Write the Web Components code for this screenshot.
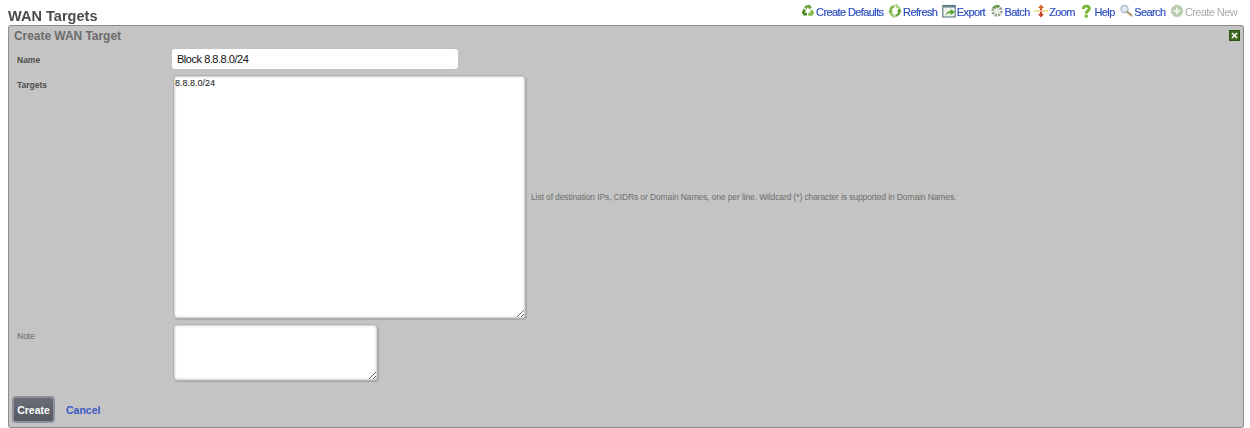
<!DOCTYPE html>
<html>
<head>
<meta charset="utf-8">
<title>WAN Targets</title>
<style>
  html, body { margin: 0; padding: 0; background: #fff; }
  body { font-family: "Liberation Sans", Arial, sans-serif; }
</style>
</head>
<body>
<wan-page>
  <tool-link slot="tools" icon="recycle">Create Defaults</tool-link>
  <tool-link slot="tools" icon="refresh">Refresh</tool-link>
  <tool-link slot="tools" icon="export">Export</tool-link>
  <tool-link slot="tools" icon="batch">Batch</tool-link>
  <tool-link slot="tools" icon="zoom">Zoom</tool-link>
  <tool-link slot="tools" icon="help">Help</tool-link>
  <tool-link slot="tools" icon="search">Search</tool-link>
  <tool-link slot="tools" icon="create" disabled>Create New</tool-link>
  <wan-form slot="content"></wan-form>
</wan-page>

<script>
const ICONS = {
  recycle: `<path d="M4.500 1.500 9 .8l1.800 3-2.400 1.400L7 3 5.600 5.200 3.200 3.800z" fill="#6aa338"/><path d="M2.600 4.800 5 6.200 3.600 8.800H6v2.800H2.600L.8 8.400z" fill="#4f8a26"/><path d="M7.200 8.800h2.600L8.800 7l2.400-1.400 2 3.200-2 3H7.200z" fill="#86bb50"/>`,
  refresh: `<path d="M6.400 1C3 1.400 1.200 3.800 1.400 7H.2l2.600 3.400L5.200 7H3.900C3.800 5.200 4.800 3.900 6.400 3.500z" fill="#7fb64c"/><path d="M7 .8 9.600 0v1.400c2.400.9 3.600 3 3.400 5.400h-2.300c.1-1.600-.6-2.800-2-3.300V5z" fill="#a8d27e"/><path d="M7.400 13c3.400-.4 5.200-2.700 5.200-5.400h1.200L11 4.400 8.800 7.600h1.300c0 1.700-1 2.800-2.700 3z" fill="#66a236"/><path d="M7 13.400 4.600 14v-1.500C2.600 11.700 1.500 10.400 1.200 9l2.200-.4c.3 1 .9 1.500 1.800 1.800V8.800z" fill="#95c76a"/>`,
  export: `<rect x=".8" y="1.500" width="12.400" height="11.500" fill="#eef3ee" stroke="#5a7380" stroke-width="1.100"/><rect x="1" y="2" width="12" height="1.600" fill="#6b8897"/><path d="M3.500 11.500C4.200 8.300 6.400 7 8.500 7V5L13 8 8.500 11.200V9C6.800 9 5 9.800 3.500 11.500z" fill="#5aa632"/>`,
  batch: `<circle cx="7" cy="7" r="4.200" fill="none" stroke="#9aa392" stroke-width="3" stroke-dasharray="2.200 1"/><path d="M3 4.500A5 5 0 0 1 9.500 2.600" fill="none" stroke="#6f9c4a" stroke-width="2.400"/><circle cx="7" cy="7" r="2" fill="#ecece6"/>`,
  zoom: `<path d="M7 .5 10 4H8.100V6.500H5.900V4H4z" fill="#d9612a"/><path d="M7 13.500 10 10H8.100V7.500H5.900V10H4z" fill="#c7402a"/><path d="M.5 6.300h2v1.400h-2zM3.300 6.300h2v1.400h-2zM8.700 6.300h2v1.400h-2zM11.500 6.300h2v1.400h-2z" fill="#e3cf3a"/>`,
  help: `<path d="M4.200 5C4.200 3 5.500 2.100 7.300 2.100c1.800 0 3 1 3 2.400 0 2.400-3 2.400-3 5" fill="none" stroke="#76b332" stroke-width="2.900"/><rect x="5.700" y="10.600" width="3.100" height="3" fill="#76b332"/>`,
  search: `<circle cx="5.500" cy="5" r="3.600" fill="#dfe7f3" stroke="#a9b8cc" stroke-width="1.200"/><path d="M8.300 7.800 12.500 11.500" stroke="#b09a6a" stroke-width="2.200" stroke-linecap="round"/>`,
  create: `<circle cx="7" cy="7" r="5.800" fill="#b9cdb0" stroke="#c6d2c0"/><path d="M7 3.800v6.400M3.800 7h6.400" stroke="#eef3ea" stroke-width="2"/>`
};

class ToolLink extends HTMLElement {
  constructor() {
    super();
    const shadow = this.attachShadow({ mode: "open" });
    const icon = ICONS[this.getAttribute("icon")] || "";
    shadow.innerHTML = `
      <style>
        :host { display: inline-flex; align-items: center; gap: 1px; color: #2f4fc0; font-size: 11px; letter-spacing: -0.6px; line-height: 14px; white-space: nowrap; -webkit-text-stroke: 0.2px currentColor; }
        :host([disabled]) { color: #a9abaa; -webkit-text-stroke: 0; }
        svg { width: 14px; height: 14px; flex: none; margin-top: -2px; }
      </style>
      <svg viewBox="0 0 14 14">${icon}</svg><slot></slot>`;
  }
}
customElements.define("tool-link", ToolLink);

class WanPage extends HTMLElement {
  constructor() {
    super();
    const shadow = this.attachShadow({ mode: "open" });
    shadow.innerHTML = `
      <style>
        :host { display: block; padding: 0 6px 0 8px; height: 428px; box-sizing: border-box; filter: blur(0.3px); }
        header { display: flex; justify-content: space-between; height: 25px; }
        h1 { margin: 8px 0 0; font-size: 14.500px; line-height: 16px; font-weight: bold; color: #4a4a4a; letter-spacing: 0.03px; }
        nav { display: flex; gap: 4.500px; padding: 5px 7px 0 0; align-items: flex-start; }
      </style>
      <header>
        <h1>WAN Targets</h1>
        <nav><slot name="tools"></slot></nav>
      </header>
      <slot name="content"></slot>`;
  }
}
customElements.define("wan-page", WanPage);

const formTemplate = document.createElement("template");
formTemplate.innerHTML = `
<style>
  :host { display: block; height: 403px; box-sizing: border-box; background: #c4c4c4; border: 1px solid #8e8e8e; border-top-color: #8a8a8a; border-radius: 3px; padding: 3px 3px 2px 3px; color: #555; position: relative; }
  h2 { margin: 0; padding-left: 2px; font-size: 12px; line-height: 14px; font-weight: bold; color: #6c6c6c; height: 20px; letter-spacing: -0.05px; }
  .close { position: absolute; top: 4px; right: 3px; width: 11px; height: 11px; background: #3d6b1f; border: 1px solid #2c4f14; box-sizing: border-box; display: flex; align-items: center; justify-content: center; }
  .close svg { width: 7px; height: 7px; display: block; }
  .rows { display: grid; grid-template-columns: 156px max-content 1fr; align-items: start; padding-left: 5px; }
  label { font-size: 8.500px; line-height: 10px; font-weight: bold; color: #4f4f4f; }
  label.plain { font-weight: normal; color: #666; }
  input, textarea { display: block; box-sizing: border-box; background: #fff; font-family: "Liberation Sans", Arial, sans-serif; color: #111; margin: 0; outline: none; }
  input { width: 286px; height: 20px; margin-left: -1px; border: 0; border-radius: 3px; padding: 0 5px; font-size: 11px; letter-spacing: -0.47px; }
  textarea { border: 1px solid #b0b0b0; border-radius: 4px; box-shadow: inset 0 0 3px rgba(0,0,0,.4), 1px 1px 1px rgba(0,0,0,.15); padding: 2px 1px; font-size: 9px; line-height: 10px; resize: both; }
  .name-label { padding-top: 6px; }
  .targets-label { padding-top: 5px; }
  .note-label { padding-top: 7px; }
  .targets { width: 353px; height: 244px; margin-top: 6px; }
  .note { width: 205px; height: 57px; margin-top: 5px; }
  .hint { align-self: center; margin: 6px 0 0 5px; font-size: 8.500px; line-height: 10px; color: #6e6e6e; white-space: nowrap; letter-spacing: -0.115px; }
  .name-label, .targets-label, .note-label { grid-column: 1; }
  .targets-label { margin-top: 6px; }
  .note-label { margin-top: 5px; }
  .actions { display: flex; align-items: center; gap: 11px; margin-top: 15px; }
  button { width: 43px; height: 27px; padding: 0; box-sizing: border-box; border: 2px solid #8d919c; border-radius: 4px; background: linear-gradient(#6a6d76, #565962); color: #fff; font: bold 10.500px "Liberation Sans", Arial, sans-serif; }
  a { color: #3a58c4; font-size: 10.500px; font-weight: bold; text-decoration: none; }
</style>
<h2>Create WAN Target</h2>
<div class="close"><svg viewBox="0 0 7 7"><path d="M1 1 6 6M6 1 1 6" stroke="#fff" stroke-width="1.600"/></svg></div>
<div class="rows">
  <label class="name-label">Name</label>
  <input type="text" value="Block 8.8.8.0/24">
  <span></span>
  <label class="targets-label">Targets</label>
  <textarea class="targets">8.8.8.0/24</textarea>
  <span class="hint">List of destination IPs, CIDRs or Domain Names, one per line. Wildcard (*) character is supported in Domain Names.</span>
  <label class="note-label plain">Note</label>
  <textarea class="note"></textarea>
  <span></span>
</div>
<div class="actions">
  <button type="button">Create</button>
  <a href="#">Cancel</a>
</div>`;

class WanForm extends HTMLElement {
  constructor() {
    super();
    this.attachShadow({ mode: "open" }).appendChild(formTemplate.content.cloneNode(true));
  }
}
customElements.define("wan-form", WanForm);
</script>
</body>
</html>
